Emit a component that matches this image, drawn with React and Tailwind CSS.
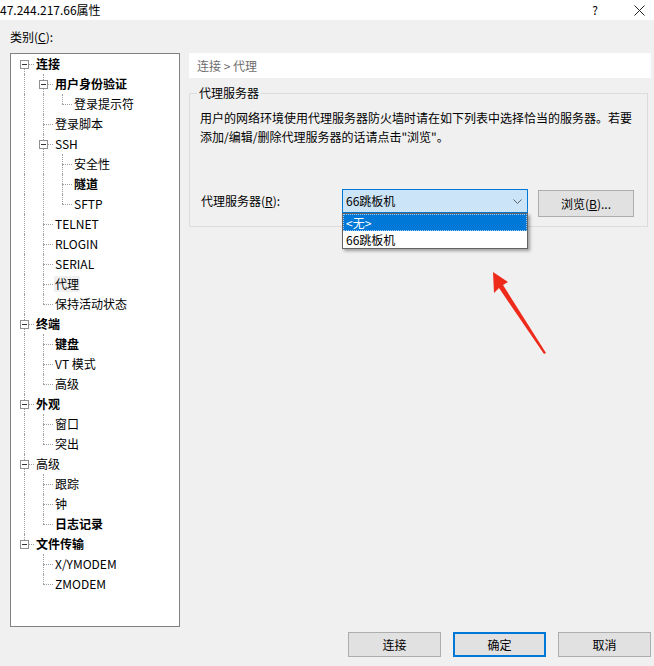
import React from 'react';

// Category tree for the session properties dialog
const categories = [
  {
    label: '连接',
    bold: true,
    children: [
      { label: '用户身份验证', bold: true, children: [{ label: '登录提示符' }] },
      { label: '登录脚本' },
      {
        label: 'SSH',
        children: [{ label: '安全性' }, { label: '隧道', bold: true }, { label: 'SFTP' }],
      },
      { label: 'TELNET' },
      { label: 'RLOGIN' },
      { label: 'SERIAL' },
      { label: '代理', selected: true },
      { label: '保持活动状态' },
    ],
  },
  {
    label: '终端',
    bold: true,
    children: [{ label: '键盘', bold: true }, { label: 'VT 模式' }, { label: '高级' }],
  },
  {
    label: '外观',
    bold: true,
    children: [{ label: '窗口' }, { label: '突出' }],
  },
  {
    label: '高级',
    children: [{ label: '跟踪' }, { label: '钟' }, { label: '日志记录', bold: true }],
  },
  {
    label: '文件传输',
    bold: true,
    children: [{ label: 'X/YMODEM' }, { label: 'ZMODEM' }],
  },
];

// Flatten the tree into rows, keeping track of which ancestor columns need a guide line
const flatten = (nodes, depth = 0, guides = [], out = []) => {
  nodes.forEach((node, i) => {
    const isLast = i === nodes.length - 1;
    const isFirstRoot = depth === 0 && i === 0;
    out.push({ node, depth, guides, isLast, isFirstRoot });
    if (node.children) flatten(node.children, depth + 1, [...guides, !isLast], out);
  });
  return out;
};

const rows = flatten(categories);

const TreeRow = ({ row }) => {
  const { node, guides, isLast, isFirstRoot } = row;
  return (
    <div className="flex h-[20px] items-center">
      {guides.map((g, k) => (
        <div key={k} className="relative h-full w-[19px] shrink-0">
          {g && <span className="absolute left-[9px] top-0 h-full border-l border-dotted border-[#a0a0a0]" />}
        </div>
      ))}
      <div className="relative h-full w-[19px] shrink-0">
        {!isFirstRoot && (
          <span className="absolute left-[9px] top-0 h-[10px] border-l border-dotted border-[#a0a0a0]" />
        )}
        {!isLast && (
          <span className="absolute left-[9px] top-[10px] h-[10px] border-l border-dotted border-[#a0a0a0]" />
        )}
        <span className="absolute left-[9px] top-[10px] w-[10px] border-t border-dotted border-[#a0a0a0]" />
        {node.children && (
          <span className="absolute left-[5px] top-[6px] flex h-[9px] w-[9px] items-center justify-center border border-[#919191] bg-white">
            <span className="h-px w-[5px] bg-[#333]" />
          </span>
        )}
      </div>
      <span
        className={`ml-[1px] px-[1px] text-[12px] leading-[16px] text-black ${node.bold ? 'font-bold' : ''} ${
          node.selected ? 'bg-[#f0f0f0]' : ''
        }`}
      >
        {node.label}
      </span>
    </div>
  );
};

const DialogButton = ({ children, primary }) => (
  <button
    type="button"
    className={`flex h-[25px] w-[93px] items-center justify-center bg-[#e1e1e1] text-[12px] text-black ${
      primary ? 'border-2 border-[#0078d7]' : 'border border-[#adadad]'
    }`}
  >
    {children}
  </button>
);

export default function App() {
  return (
    <div className='relative flex h-[666px] w-[654px] flex-col overflow-hidden bg-[#f0f0f0] font-["Noto_Sans_CJK_SC",sans-serif] text-[12px] text-black'>
      {/* Title bar */}
      <div className="flex h-[20px] shrink-0 items-center bg-white">
        <span className="text-[12px] leading-[16px]">47.244.217.66属性</span>
        <span className="ml-auto mr-[36px] text-[12px] leading-[16px]">?</span>
        <svg width="11" height="11" viewBox="0 0 11 11" className="mr-[9px]">
          <path d="M0.5 0.5 L10.5 10.5 M10.5 0.5 L0.5 10.5" stroke="#222" strokeWidth="1" />
        </svg>
      </div>

      <div className="flex flex-1">
        {/* Category tree */}
        <div className="ml-[10px] flex w-[170px] flex-col">
          <div className="flex h-[33px] items-center pt-px leading-[16px]">
            类别(<span className="underline">C</span>):
          </div>
          <div className="h-[574px] border border-[#828282] bg-white pl-[4px]">
            {rows.map((row, i) => (
              <TreeRow key={i} row={row} />
            ))}
          </div>
        </div>

        {/* Settings page */}
        <div className="ml-[9px] flex w-[462px] flex-col pt-[33px]">
          <div className="flex h-[25px] items-center bg-white pl-[8px] leading-[16px] text-[#6d6d6d]">
            连接 &gt; 代理
          </div>

          <fieldset className="mt-[7px] w-[459px] border border-[#dcdcdc] px-[10px] pb-[9px]">
            <legend className="-ml-[3px] px-[2px] leading-[16px]">代理服务器</legend>
            <p className="mt-[7px] leading-[19px]">
              用户的网络环境使用代理服务器防火墙时请在如下列表中选择恰当的服务器。若要
              <br />
              添加/编辑/删除代理服务器的话请点击"浏览"。
            </p>

            <div className="mt-[43px] flex items-start">
              <div className="ml-[1px] flex h-[24px] w-[141px] items-center">
                代理服务器(<span className="underline">R</span>):
              </div>
              <div className="relative h-[24px] w-[186px]">
                <div className="flex h-full items-center border border-[#0078d7] bg-[#cce4f7] pl-[3px] pr-[5px]">
                  <span className="leading-[16px]">66跳板机</span>
                  <svg width="9" height="5" viewBox="0 0 9 5" className="ml-auto">
                    <path d="M0.5 0.5 L4.5 4.5 L8.5 0.5" fill="none" stroke="#606060" strokeWidth="1" />
                  </svg>
                </div>
                {/* Open drop-down list */}
                <div className="absolute left-0 top-[24px] z-10 w-[186px] border border-[#646464] bg-white shadow-[2px_2px_3px_rgba(0,0,0,0.35)]">
                  <div className="flex h-[17px] items-center border border-dotted border-[#9ec9ee] bg-[#0078d7] pl-[2px] text-white">
                    &lt;无&gt;
                  </div>
                  <div className="flex h-[17px] items-center pl-[3px]">66跳板机</div>
                </div>
              </div>
              <button
                type="button"
                className="ml-[10px] mt-[1px] flex h-[27px] w-[96px] items-center justify-center border border-[#adadad] bg-[#e1e1e1]"
              >
                浏览(<span className="underline">B</span>)...
              </button>
            </div>
          </fieldset>

          <div className="mb-[9px] mt-auto flex justify-end gap-[12px]">
            <DialogButton>连接</DialogButton>
            <DialogButton primary>确定</DialogButton>
            <DialogButton>取消</DialogButton>
          </div>
        </div>
      </div>

      {/* Red pointer arrow */}
      <svg className="pointer-events-none absolute left-0 top-0" width="654" height="666">
        <polygon
          points="493,272 508,282 503,285 546,353 544,354 499,288 494,293"
          fill="#ee2a1b"
        />
      </svg>
    </div>
  );
}
